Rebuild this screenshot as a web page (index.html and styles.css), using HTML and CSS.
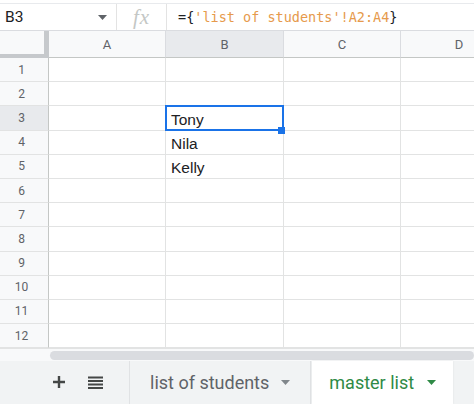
FILE: index.html
```html
<!DOCTYPE html>
<html>
<head>
<meta charset="utf-8">
<link rel="stylesheet" href="styles.css">
</head>
<body>
<div class="app">
  <div class="fbar">
    <div class="namebox"><span>B3</span><svg class="caret" width="9" height="5" viewBox="0 0 9 5"><path d="M0 0h9L4.5 5z"/></svg></div>
    <div class="fx">fx</div>
    <div class="formula">={<span class="str">'list of students'!A2:A4</span>}</div>
  </div>
  <div class="sheetwrap">
    <div class="sheet">
      <div class="corner"></div><div class="ch">A</div><div class="ch hl">B</div><div class="ch">C</div><div class="ch">D</div>
      <div class="rh">1</div><div class="c"></div><div class="c"></div><div class="c"></div><div class="c"></div>
      <div class="rh">2</div><div class="c"></div><div class="c"></div><div class="c"></div><div class="c"></div>
      <div class="rh hl">3</div><div class="c"></div><div class="c sel">Tony</div><div class="c"></div><div class="c"></div>
      <div class="rh">4</div><div class="c"></div><div class="c">Nila</div><div class="c"></div><div class="c"></div>
      <div class="rh">5</div><div class="c"></div><div class="c">Kelly</div><div class="c"></div><div class="c"></div>
      <div class="rh">6</div><div class="c"></div><div class="c"></div><div class="c"></div><div class="c"></div>
      <div class="rh">7</div><div class="c"></div><div class="c"></div><div class="c"></div><div class="c"></div>
      <div class="rh">8</div><div class="c"></div><div class="c"></div><div class="c"></div><div class="c"></div>
      <div class="rh">9</div><div class="c"></div><div class="c"></div><div class="c"></div><div class="c"></div>
      <div class="rh">10</div><div class="c"></div><div class="c"></div><div class="c"></div><div class="c"></div>
      <div class="rh">11</div><div class="c"></div><div class="c"></div><div class="c"></div><div class="c"></div>
      <div class="rh">12</div><div class="c"></div><div class="c"></div><div class="c"></div><div class="c"></div>
    </div>
  </div>
  <div class="hscroll"><div class="hs-left"></div><div class="thumb"></div></div>
  <div class="tabbar">
    <div class="tb-btns">
      <svg width="12" height="12" viewBox="0 0 12 12"><path d="M6 0v12M0 6h12" stroke="#444746" stroke-width="2.4"/></svg>
      <svg width="15" height="13" viewBox="0 0 15 13" fill="#444746"><rect x="0" y="0.5" width="15" height="2"/><rect x="0" y="4" width="15" height="2"/><rect x="0" y="7.5" width="15" height="2"/><rect x="0" y="11" width="15" height="2"/></svg>
    </div>
    <div class="tab">list of students<svg class="tcaret" width="9" height="5" viewBox="0 0 9 5"><path d="M0 0h9L4.5 5z"/></svg></div>
    <div class="tab active">master list<svg class="tcaret" width="9" height="5" viewBox="0 0 9 5"><path d="M0 0h9L4.5 5z"/></svg></div>
  </div>
</div>
</body>
</html>
```
FILE: styles.css
```css
* { box-sizing: border-box; margin: 0; padding: 0; }
html, body { width: 474px; height: 404px; overflow: hidden; background: #fff; }
body { font-family: Roboto, "Liberation Sans", sans-serif; }

.app { display: flex; flex-direction: column; height: 404px; }

.fbar {
  margin-top: 3px;
  height: 28px;
  flex: none;
  border-top: 1px solid #e8eaed;
  border-bottom: 1px solid #dadce0;
  display: flex;
  align-items: stretch;
}
.namebox {
  width: 117px;
  border-right: 1px solid #e3e3e3;
  display: flex;
  align-items: center;
  justify-content: space-between;
  padding: 0 9px 0 5px;
  font-size: 15.5px;
  color: #202124;
}
.caret { fill: #5f6368; }
.fx {
  width: 50px;
  border-right: 1px solid #e3e3e3;
  display: flex;
  align-items: center;
  justify-content: center;
  font-family: "Liberation Serif", serif;
  font-style: italic;
  font-size: 21px;
  letter-spacing: 1px;
  color: #c4c7c5;
}
.formula {
  display: flex;
  align-items: center;
  padding-left: 11px;
  font-family: "DejaVu Sans Mono", monospace;
  font-size: 13.5px;
  color: #202124;
  white-space: pre;
}
.str { color: #e69a4c; }

.sheetwrap { flex: none; height: 317.4px; overflow: hidden; }
.sheet {
  display: grid;
  grid-template-columns: 49px 117px 118px 117px 117px;
  grid-template-rows: 27px repeat(12, 24.2px);
  width: 518px;
}
.corner {
  background: #f8f9fa;
  border-right: 5px solid #c6c9cc;
  border-bottom: 4px solid #c6c9cc;
}
.ch {
  background: #f8f9fa;
  border-right: 1px solid #dadce0;
  border-bottom: 1px solid #c4c7c5;
  display: flex;
  align-items: center;
  justify-content: center;
  font-size: 13px;
  color: #5f6368;
}
.rh {
  background: #f8f9fa;
  border-right: 1px solid #c4c7c5;
  border-bottom: 1px solid #e2e3e3;
  display: flex;
  align-items: center;
  justify-content: center;
  padding-right: 5px;
  font-size: 12px;
  color: #5f6368;
}
.hl { background: #e8eaed; }
.c {
  border-right: 1px solid #e2e3e3;
  border-bottom: 1px solid #e2e3e3;
  display: flex;
  align-items: center;
  padding: 4px 0 0 5px;
  font-family: "Liberation Sans", Arial, sans-serif;
  font-size: 15.5px;
  color: #202124;
}
.sel { position: relative; }
.sel::after {
  content: "";
  position: absolute;
  left: -1px; top: -1px; right: -1px; bottom: -1px;
  border: 2px solid #1a73e8;
}
.sel::before {
  content: "";
  position: absolute;
  right: -2px;
  bottom: -4px;
  width: 7px;
  height: 7px;
  background: #1a73e8;
  z-index: 1;
}

.hscroll {
  flex: none;
  height: 12.6px;
  display: flex;
  background: #f8f9fa;
  border-top: 1px solid #e2e3e3;
}
.hs-left { width: 49px; }
.thumb {
  flex: 1;
  margin: 2px 0 1px 1px;
  border-radius: 5px;
  background: #dadce0;
}

.tabbar {
  flex: 1;
  display: flex;
  align-items: stretch;
  background: #f1f3f4;
}
.tb-btns {
  width: 130px;
  border-right: 1px solid #e0e2e4;
  display: flex;
  align-items: center;
  gap: 23px;
  padding-left: 53px;
}
.tab {
  display: flex;
  align-items: center;
  gap: 12px;
  padding: 0 20px 0 20px;
  font-size: 18px;
  color: #5f6368;
  border-right: 1px solid #e0e2e4;
}
.tcaret { fill: #80868b; }
.tab.active {
  margin-left: 1px;
  padding: 0 17px 0 17px;
  gap: 13px;
  width: 141px;
  background: #fff;
  color: #2f8a46;
  border-right: none;
  box-shadow: 0 0 2px rgba(0,0,0,0.08);
}
.tab.active .tcaret { fill: #2f8a46; }
```
